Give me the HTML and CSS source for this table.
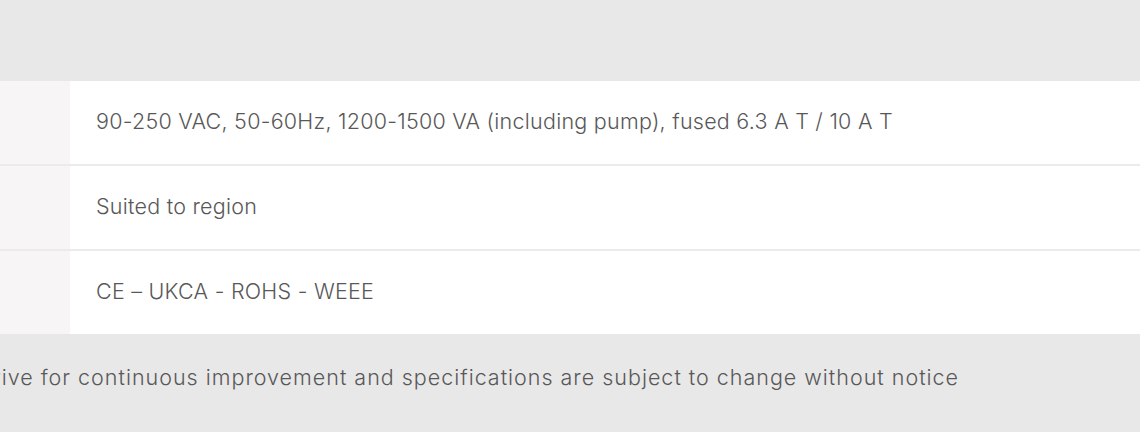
FILE: index.html
```html
<!DOCTYPE html>
<html lang="en">
<head>
<meta charset="utf-8">
<title>Specifications</title>
<link rel="stylesheet" href="styles.css">
</head>
<body>
<main class="page">
  <div class="top-band"></div>
  <div class="specs">
    <div class="row">
      <div class="label"></div>
      <div class="value">90-250 VAC, 50-60Hz, 1200-1500 VA (including pump), fused 6.3 A T / 10 A T</div>
    </div>
    <div class="row">
      <div class="label"></div>
      <div class="value">Suited to region</div>
    </div>
    <div class="row">
      <div class="label"></div>
      <div class="value">CE – UKCA - ROHS - WEEE</div>
    </div>
  </div>
  <div class="note"><p class="note-text">We strive for continuous improvement and specifications are subject to change without notice</p></div>
</main>
</body>
</html>
```

FILE: styles.css
```css
html, body {
  margin: 0;
  padding: 0;
}
body {
  background: #e8e8e8;
  font-family: Inter, "Open Sans", sans-serif;
  font-weight: 300;
  color: #585858;
  overflow: hidden;
  width: 1140px;
  height: 432px;
}
.page {
  display: flex;
  flex-direction: column;
}
.top-band {
  height: 81px;
}
.specs {
  display: flex;
  flex-direction: column;
  gap: 2px;
  background: #ebebeb;
}
.row {
  display: flex;
  height: 83px;
}
.label {
  width: 70px;
  flex: none;
  background: #f7f5f6;
}
.value {
  flex: 1;
  background: #ffffff;
  display: flex;
  align-items: center;
  padding-left: 26px;
  padding-bottom: 3px;
  font-size: 21.5px;
  letter-spacing: 0.25px;
}
.note {
  display: flex;
  justify-content: flex-end;
  width: 959px;
  padding-top: 31px;
}
.note-text {
  flex: none;
  margin: 0;
  font-size: 21.5px;
  line-height: 24px;
  letter-spacing: 0.99px;
  white-space: nowrap;
}
```
